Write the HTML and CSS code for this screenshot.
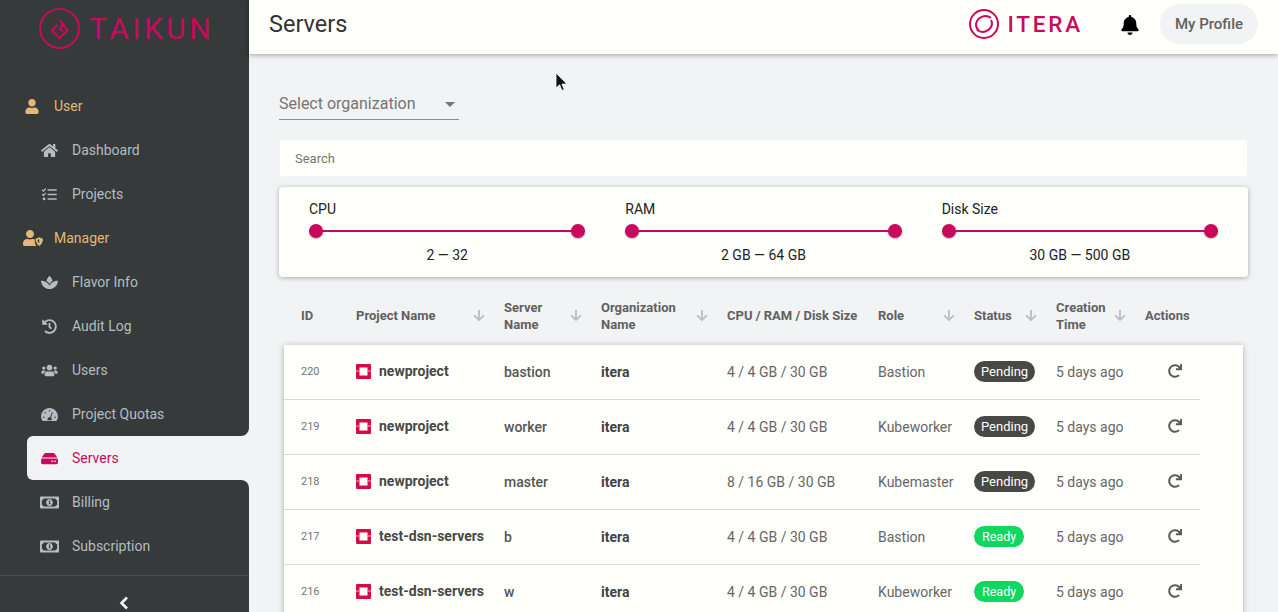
FILE: index.html
```html
<!DOCTYPE html>
<html lang="en">
<head>
  <meta charset="UTF-8" />
  <meta name="viewport" content="width=device-width, initial-scale=1.0" />
  <title>Servers</title>
  <link rel="stylesheet" href="styles.css">
</head>
<body>
  <svg class="sprite" xmlns="http://www.w3.org/2000/svg">
    <symbol id="i-user" viewBox="0 0 448 512"><path d="M224 256c70.7 0 128-57.3 128-128S294.7 0 224 0 96 57.3 96 128s57.3 128 128 128zm89.6 32h-16.7c-22.2 10.2-46.9 16-72.9 16s-50.6-5.8-72.9-16h-16.7C60.2 288 0 348.2 0 422.4V464c0 26.5 21.5 48 48 48h352c26.5 0 48-21.5 48-48v-41.6c0-74.2-60.2-134.4-134.4-134.4z"/></symbol>
    <symbol id="i-home" viewBox="0 0 576 512"><path d="M280.37 148.26L96 300.11V464a16 16 0 0 0 16 16l112.06-.29a16 16 0 0 0 15.92-16V368a16 16 0 0 1 16-16h64a16 16 0 0 1 16 16v95.64a16 16 0 0 0 16 16.05L464 480a16 16 0 0 0 16-16V300L295.67 148.26a12.19 12.19 0 0 0-15.3 0zM571.6 251.47L488 182.56V44.05a12 12 0 0 0-12-12h-56a12 12 0 0 0-12 12v72.61L318.47 43a48 48 0 0 0-61 0L4.34 251.47a12 12 0 0 0-1.6 16.9l25.5 31A12 12 0 0 0 45.15 301l235.22-193.74a12.19 12.19 0 0 1 15.3 0L530.9 301a12 12 0 0 0 16.9-1.6l25.5-31a12 12 0 0 0-1.7-16.93z"/></symbol>
    <symbol id="i-tasks" viewBox="0 0 512 512"><path d="M190 80h310v52H190zM190 230h310v52H190zM190 380h310v52H190z"/><path d="M20 80l30 30 62-72 30 26-90 106-62-62zM20 230l30 30 62-72 30 26-90 106-62-62z"/><circle cx="70" cy="406" r="48"/></symbol>
    <symbol id="i-manager" viewBox="0 0 640 512"><path d="M224 256c70.7 0 128-57.3 128-128S294.7 0 224 0 96 57.3 96 128s57.3 128 128 128zm89.6 32h-16.7c-22.2 10.2-46.9 16-72.9 16s-50.6-5.800-72.9-16h-16.7C60.2 288 0 348.2 0 422.4V464c0 26.5 21.5 48 48 48h352c8 0 16-2 23-6-30-40-47-95-47-160v-45c-19-8-40-13-62.4-13z"/><path fill-rule="evenodd" d="M520 232l112 45c6 2 8 8 8 14 0 90-50 180-120 221-70-41-120-131-120-221 0-6 2-12 8-14zm0 62l-56 22c3 50 26 92 56 116z"/></symbol>
    <symbol id="i-spa" viewBox="0 0 576 512"><path d="M568.25 192c-29.04.13-135.01 6.16-213.84 83-33.12 29.63-53.36 63.3-66.41 94.86-13.05-31.56-33.29-65.23-66.41-94.86-78.83-76.84-184.8-82.87-213.84-83-4.41-.02-7.79 3.4-7.75 7.82.23 27.92 7.14 126.14 88.77 199.3C172.79 480.94 256.03 480 288 480s115.19.94 199.23-80.88c81.64-73.17 88.54-171.38 88.77-199.3.04-4.42-3.34-7.84-7.75-7.82zM287.98 302.6c12.82-18.85 27.6-35.78 44.09-50.52 19.09-18.61 39.58-33.3 60.26-45.18-16.44-70.5-51.72-133.05-96.73-172.22-4.11-3.58-11.02-3.58-15.14 0-44.99 39.14-80.27 101.63-96.74 172.07 20.37 11.7 40.5 26.14 59.22 44.39a282.768 282.768 0 0 1 45.04 51.46z"/></symbol>
    <symbol id="i-history" viewBox="0 0 512 512"><path d="M504 255.531c.253 136.64-111.18 248.372-247.82 248.468-59.015.042-113.223-20.53-155.822-54.911-11.077-8.94-11.905-25.541-1.839-35.607l11.267-11.267c8.609-8.609 22.353-9.551 31.891-1.984C173.062 425.135 212.781 440 256 440c101.705 0 184-82.311 184-184 0-101.705-82.311-184-184-184-48.814 0-93.149 18.969-126.068 49.932l50.754 50.754c10.08 10.08 2.941 27.314-11.313 27.314H24c-8.837 0-16-7.163-16-16V38.627c0-14.254 17.234-21.393 27.314-11.314l49.372 49.372C129.209 34.136 189.552 8 256 8c136.81 0 247.747 110.78 248 247.531zm-180.912 78.784l9.823-12.63c8.138-10.463 6.253-25.542-4.21-33.679L288 256.349V152c0-13.255-10.745-24-24-24h-16c-13.255 0-24 10.745-24 24v135.651l65.409 50.874c10.463 8.137 25.541 6.253 33.679-4.21z"/></symbol>
    <symbol id="i-users" viewBox="0 0 640 512"><path d="M96 224c35.3 0 64-28.7 64-64s-28.7-64-64-64-64 28.7-64 64 28.7 64 64 64zm448 0c35.3 0 64-28.7 64-64s-28.7-64-64-64-64 28.7-64 64 28.7 64 64 64zm32 32h-64c-17.6 0-33.5 7.1-45.1 18.6 40.3 22.1 68.9 62 75.1 109.4h66c17.7 0 32-14.3 32-32v-32c0-35.3-28.7-64-64-64zm-256 0c61.9 0 112-50.1 112-112S381.9 32 320 32 208 82.1 208 144s50.1 112 112 112zm76.8 32h-8.3c-20.8 10-43.9 16-68.5 16s-47.6-6-68.5-16h-8.3C179.6 288 128 339.6 128 403.2V432c0 26.5 21.5 48 48 48h288c26.5 0 48-21.5 48-48v-28.8c0-63.6-51.6-115.2-115.2-115.2zm-223.7-13.4C161.5 263.1 145.6 256 128 256H64c-35.3 0-64 28.7-64 64v32c0 17.7 14.3 32 32 32h65.9c6.3-47.4 34.9-87.3 75.2-109.4z"/></symbol>
    <symbol id="i-gauge" viewBox="0 0 576 512"><path fill-rule="evenodd" d="M288 32C128.94 32 0 160.94 0 320c0 52.8 14.25 102.26 39.06 144.8 5.61 9.62 16.3 15.2 27.44 15.2h443c11.14 0 21.83-5.58 27.44-15.2C561.75 422.26 576 372.8 576 320c0-159.06-128.94-288-288-288zm0 72a26 26 0 1 1 0 52 26 26 0 0 1 0-52zM96 376a26 26 0 1 1 0-52 26 26 0 0 1 0 52zm48-152a26 26 0 1 1 0-52 26 26 0 0 1 0 52zm228-54l30 12-62 178c16 14 26 34 26 56 0 10-2 18-6 32H226c-4-14-6-22-6-32 0-38 30-68 68-68 8 0 14 0 20 2zm108 206a26 26 0 1 1 0-52 26 26 0 0 1 0 52z"/></symbol>
    <symbol id="i-hdd" viewBox="0 0 576 512"><path d="M576 304v96c0 26.51-21.49 48-48 48H48c-26.51 0-48-21.49-48-48v-96c0-26.51 21.49-48 48-48h480c26.51 0 48 21.49 48 48zm-48-80a79.557 79.557 0 0 1 30.777 6.165L462.25 85.374A48.003 48.003 0 0 0 422.311 64H153.689a48 48 0 0 0-39.938 21.374L17.223 230.165A79.557 79.557 0 0 1 48 224h480zm-48 96c-17.673 0-32 14.327-32 32s14.327 32 32 32 32-14.327 32-32-14.327-32-32-32zm-96 0c-17.673 0-32 14.327-32 32s14.327 32 32 32 32-14.327 32-32-14.327-32-32-32z"/></symbol>
    <symbol id="i-money" viewBox="0 0 640 400"><path fill-rule="evenodd" d="M24 0h592c13 0 24 11 24 24v352c0 13-11 24-24 24H24c-13 0-24-11-24-24V24C0 11 11 0 24 0zm96 64c0 32-24 56-56 56v160c32 0 56 24 56 56h400c0-32 24-56 56-56V120c-32 0-56-24-56-56z"/><path fill-rule="evenodd" d="M320 84c62 0 104 52 116 116-12 64-54 116-116 116s-104-52-116-116c12-64 54-116 116-116zm-22 50v36h10v52h-14v34h60v-34h-12v-88z"/></symbol>
    <symbol id="i-bell" viewBox="0 0 448 512"><path d="M224 512c35.32 0 63.97-28.65 63.97-64H160.03c0 35.35 28.65 64 63.97 64zm215.39-149.71c-19.32-20.76-55.47-51.99-55.47-154.29 0-77.7-54.48-139.9-127.94-155.16V32c0-17.67-14.32-32-31.98-32s-31.98 14.33-31.98 32v20.84C118.56 68.1 64.08 130.3 64.08 208c0 102.3-36.15 133.53-55.47 154.29-6 6.45-8.66 14.16-8.61 21.71.11 16.4 12.98 32 32.1 32h383.8c19.12 0 32-15.6 32.1-32 .05-7.55-2.61-15.27-8.61-21.71z"/></symbol>
    <symbol id="i-redo" viewBox="0 0 512 512"><path d="M500.33 0h-47.41a12 12 0 0 0-12 12.57l4 82.76A247.42 247.42 0 0 0 256 8C119.34 8 7.9 119.53 8 256.19 8.1 393.07 119.1 504 256 504a247.1 247.1 0 0 0 166.18-63.91 12 12 0 0 0 .48-17.43l-34-34a12 12 0 0 0-16.38-.55A176 176 0 1 1 402.1 157.8l-101.53-4.87a12 12 0 0 0-12.57 12v47.41a12 12 0 0 0 12 12h200.33a12 12 0 0 0 12-12V12a12 12 0 0 0-12-12z"/></symbol>
    <symbol id="i-arrow" viewBox="0 0 12 12"><path d="M6 .5v10M1.2 5.8L6 10.6l4.8-4.8" fill="none" stroke="currentColor" stroke-width="1.8"/></symbol>
    <symbol id="i-project" viewBox="0 0 15 15"><path fill-rule="evenodd" d="M1 0h13a1 1 0 0 1 1 1v13a1 1 0 0 1-1 1H1a1 1 0 0 1-1-1V1a1 1 0 0 1 1-1zm2.500 3.500v8h8v-8z"/><path fill="#f7a8bd" d="M0 6.500h3.500v1H0zM11.500 6.500H15v1h-3.500z"/></symbol>
  </svg>

  <div class="app">
    <aside class="sidebar">
      <div class="brand">
        <svg class="brand-mark" viewBox="0 0 40 40" fill="none" stroke="#c90a5c">
          <circle cx="20" cy="20" r="19" stroke-width="2"/>
          <path d="M18 16.500l-5.500 5.500 7.500 7.500 8-8-6-6M20 12l4 4.500-3.500 3.500 3 3" stroke-width="2"/>
        </svg>
        <span class="brand-name">TAIKUN</span>
      </div>

      <nav class="nav">
        <div class="nav-row"><a class="nav-link section"><svg class="ic ic-section"><use href="#i-user"/></svg>User</a></div>
        <div class="nav-row"><a class="nav-link"><svg class="ic"><use href="#i-home"/></svg>Dashboard</a></div>
        <div class="nav-row"><a class="nav-link"><svg class="ic"><use href="#i-tasks"/></svg>Projects</a></div>
        <div class="nav-row"><a class="nav-link section"><svg class="ic ic-section-wide"><use href="#i-manager"/></svg>Manager</a></div>
        <div class="nav-row"><a class="nav-link"><svg class="ic"><use href="#i-spa"/></svg>Flavor Info</a></div>
        <div class="nav-row"><a class="nav-link"><svg class="ic"><use href="#i-history"/></svg>Audit Log</a></div>
        <div class="nav-row"><a class="nav-link"><svg class="ic ic-wide"><use href="#i-users"/></svg>Users</a></div>
        <div class="nav-row before-active"><a class="nav-link"><svg class="ic"><use href="#i-gauge"/></svg>Project Quotas</a></div>
        <div class="nav-row"><a class="nav-link active"><svg class="ic"><use href="#i-hdd"/></svg>Servers</a></div>
        <div class="nav-row after-active"><a class="nav-link"><svg class="ic ic-wide"><use href="#i-money"/></svg>Billing</a></div>
        <div class="nav-row"><a class="nav-link"><svg class="ic ic-wide"><use href="#i-money"/></svg>Subscription</a></div>
      </nav>

      <div class="collapse">
        <svg width="10" height="14" viewBox="0 0 10 14" fill="none" stroke="#f1f3f4" stroke-width="2.6"><path d="M8 1.500L2.500 7 8 12.500"/></svg>
      </div>
    </aside>

    <div class="page">
      <header class="topbar">
        <h1 class="page-title">Servers</h1>
        <div class="topbar-right">
          <div class="itera">
            <svg class="itera-mark" viewBox="0 0 30 30" fill="none" stroke="#c90a5c">
              <circle cx="15" cy="15" r="14" stroke-width="2"/>
              <path d="M22 9a9.500 9.500 0 0 0-15 6 9 9 0 0 0 3 7M8 21a9.500 9.500 0 0 0 15-6 9 9 0 0 0-1-4" stroke-width="2"/>
            </svg>
            <span class="itera-name">ITERA</span>
          </div>
          <svg class="bell"><use href="#i-bell"/></svg>
          <button class="profile-btn">My Profile</button>
        </div>
      </header>

      <main class="content">
        <div class="org-select">
          <span>Select organization</span>
          <i class="caret"></i>
        </div>

        <div class="search">Search</div>

        <section class="filters">
          <div class="filter">
            <div class="filter-label">CPU</div>
            <div class="track"><i class="thumb"></i><i class="thumb"></i></div>
            <div class="filter-value">2 — 32</div>
          </div>
          <div class="filter">
            <div class="filter-label">RAM</div>
            <div class="track"><i class="thumb"></i><i class="thumb"></i></div>
            <div class="filter-value">2 GB — 64 GB</div>
          </div>
          <div class="filter">
            <div class="filter-label">Disk Size</div>
            <div class="track"><i class="thumb"></i><i class="thumb"></i></div>
            <div class="filter-value">30 GB — 500 GB</div>
          </div>
        </section>

        <div class="table-head cols">
          <div>ID</div>
          <div class="sort"><span>Project Name</span><svg class="arrow"><use href="#i-arrow"/></svg></div>
          <div class="sort"><span>Server<br>Name</span><svg class="arrow"><use href="#i-arrow"/></svg></div>
          <div class="sort"><span>Organization<br>Name</span><svg class="arrow"><use href="#i-arrow"/></svg></div>
          <div>CPU / RAM / Disk Size</div>
          <div class="sort"><span>Role</span><svg class="arrow"><use href="#i-arrow"/></svg></div>
          <div class="sort"><span>Status</span><svg class="arrow"><use href="#i-arrow"/></svg></div>
          <div class="sort"><span>Creation<br>Time</span><svg class="arrow"><use href="#i-arrow"/></svg></div>
          <div>Actions</div>
        </div>

        <section class="table-card">
          <div class="row cols">
            <div class="cell-id">220</div>
            <div class="cell-project"><svg class="project-ic"><use href="#i-project"/></svg>newproject</div>
            <div class="cell-server">bastion</div>
            <div class="cell-org">itera</div>
            <div>4 / 4 GB / 30 GB</div>
            <div>Bastion</div>
            <div class="cell-status"><span class="badge pending">Pending</span></div>
            <div>5 days ago</div>
            <div class="cell-action"><svg class="redo"><use href="#i-redo"/></svg></div>
          </div>
          <div class="row cols">
            <div class="cell-id">219</div>
            <div class="cell-project"><svg class="project-ic"><use href="#i-project"/></svg>newproject</div>
            <div class="cell-server">worker</div>
            <div class="cell-org">itera</div>
            <div>4 / 4 GB / 30 GB</div>
            <div>Kubeworker</div>
            <div class="cell-status"><span class="badge pending">Pending</span></div>
            <div>5 days ago</div>
            <div class="cell-action"><svg class="redo"><use href="#i-redo"/></svg></div>
          </div>
          <div class="row cols">
            <div class="cell-id">218</div>
            <div class="cell-project"><svg class="project-ic"><use href="#i-project"/></svg>newproject</div>
            <div class="cell-server">master</div>
            <div class="cell-org">itera</div>
            <div>8 / 16 GB / 30 GB</div>
            <div>Kubemaster</div>
            <div class="cell-status"><span class="badge pending">Pending</span></div>
            <div>5 days ago</div>
            <div class="cell-action"><svg class="redo"><use href="#i-redo"/></svg></div>
          </div>
          <div class="row cols">
            <div class="cell-id">217</div>
            <div class="cell-project"><svg class="project-ic"><use href="#i-project"/></svg>test-dsn-servers</div>
            <div class="cell-server">b</div>
            <div class="cell-org">itera</div>
            <div>4 / 4 GB / 30 GB</div>
            <div>Bastion</div>
            <div class="cell-status"><span class="badge ready">Ready</span></div>
            <div>5 days ago</div>
            <div class="cell-action"><svg class="redo"><use href="#i-redo"/></svg></div>
          </div>
          <div class="row cols">
            <div class="cell-id">216</div>
            <div class="cell-project"><svg class="project-ic"><use href="#i-project"/></svg>test-dsn-servers</div>
            <div class="cell-server">w</div>
            <div class="cell-org">itera</div>
            <div>4 / 4 GB / 30 GB</div>
            <div>Kubeworker</div>
            <div class="cell-status"><span class="badge ready">Ready</span></div>
            <div>5 days ago</div>
            <div class="cell-action"><svg class="redo"><use href="#i-redo"/></svg></div>
          </div>
        </section>

        <svg class="cursor" width="13" height="20" viewBox="0 0 13 20"><path d="M1 1v15l3.600-3.200 2.400 5.700 2.300-1-2.400-5.400H12z" fill="#111" stroke="#fff" stroke-width=".8"/></svg>
      </main>
    </div>
  </div>
</body>
</html>
```

FILE: styles.css
```css
* {
  box-sizing: border-box;
}

html, body {
  height: 100%;
}

body {
  margin: 0;
  overflow: hidden;
  font-family: Roboto, "Liberation Sans", sans-serif;
  font-size: 14px;
  color: #666;
  background: #f1f3f4;
}

.sprite {
  display: none;
}

.app {
  display: flex;
  height: 612px;
}

/* sidebar */
.sidebar {
  flex: 0 0 249px;
  background: #363a3a;
  color: #b3bdc3;
}

.brand {
  display: flex;
  align-items: center;
  height: 84px;
  padding: 8px 0 36px 39px;
}

.brand-mark {
  width: 41px;
  height: 41px;
}

.brand-name {
  margin-left: 9px;
  font-size: 30px;
  font-weight: 400;
  letter-spacing: 3.5px;
  color: #c90a5c;
}

.nav-row.before-active, .nav-row.after-active {
  background: #f1f3f4;
}

.nav-row.before-active .nav-link {
  border-bottom-right-radius: 8px;
}

.nav-row.after-active .nav-link {
  border-top-right-radius: 8px;
}

.nav-link {
  display: flex;
  align-items: center;
  height: 44px;
  padding-left: 41px;
  background: #363a3a;
}

.nav-link.section {
  padding-left: 25px;
  color: #e3b878;
}

.nav-link.active {
  margin-left: 27px;
  padding-left: 14px;
  background: #f1f3f4;
  color: #c90a5c;
  border-radius: 6px 0 0 6px;
}

.ic {
  width: 17px;
  height: 15px;
  margin-right: 14px;
  fill: currentColor;
  flex: none;
}

.ic-wide {
  width: 19px;
  height: 13px;
  margin-left: -1px;
  margin-right: 13px;
}

.ic-section {
  width: 14px;
  height: 15px;
  margin-right: 15px;
}

.ic-section-wide {
  width: 20px;
  height: 16px;
  margin-left: -2px;
  margin-right: 11px;
}

.collapse {
  display: flex;
  justify-content: center;
  margin-top: 7px;
  padding-top: 20px;
  padding-right: 2px;
  border-top: 1px solid #4a4e4e;
}

/* top bar */
.page {
  flex: 1;
  min-width: 0;
}

.topbar {
  position: relative;
  display: flex;
  align-items: center;
  justify-content: space-between;
  height: 54px;
  padding: 4px 20px 10px;
  background: #fffffc;
  box-shadow: 0 1px 5px rgba(0, 0, 0, 0.35);
}

.page-title {
  margin: 0;
  font-size: 23.5px;
  font-weight: 400;
  color: #333;
}

.topbar-right {
  display: flex;
  align-items: center;
}

.itera {
  display: flex;
  align-items: center;
}

.itera-mark {
  width: 30px;
  height: 30px;
}

.itera-name {
  margin-left: 8px;
  font-size: 22.5px;
  font-weight: 500;
  letter-spacing: 2.8px;
  color: #c90a5c;
}

.bell {
  width: 18px;
  height: 20px;
  margin: 2px 21px 0 38px;
  fill: #000;
}

.profile-btn {
  width: 98px;
  height: 40px;
  border: 0;
  border-radius: 20px;
  background: #f1f3f4;
  font-family: inherit;
  font-size: 15px;
  font-weight: 500;
  color: #616161;
}

/* content */
.content {
  position: relative;
  padding: 34px 0 0 30px;
}

.org-select {
  display: flex;
  align-items: center;
  justify-content: space-between;
  width: 180px;
  height: 32px;
  padding: 0 4px 0 0;
  border-bottom: 1px solid #8a8a8a;
  font-size: 16px;
  color: #757575;
}

.caret {
  width: 0;
  height: 0;
  margin-top: 1px;
  border-left: 5px solid transparent;
  border-right: 5px solid transparent;
  border-top: 5px solid #757575;
}

.search {
  width: 967px;
  height: 36px;
  margin: 20px 0 0 1px;
  padding-left: 15px;
  border-radius: 2px;
  background: #fffffc;
  font-size: 13px;
  line-height: 38px;
  color: #777;
}

.filters {
  display: grid;
  grid-template-columns: repeat(3, 1fr);
  gap: 40px;
  width: 969px;
  height: 90px;
  margin-top: 11px;
  padding: 13px 30px;
  border-radius: 4px;
  background: #fffffc;
  box-shadow: 0 1px 5px rgba(0, 0, 0, 0.3);
}

.filter-label, .filter-value {
  height: 18px;
  line-height: 18px;
  color: #222;
}

.filter-value {
  margin-top: 8px;
  text-align: center;
}

.track {
  display: flex;
  justify-content: space-between;
  height: 14px;
  margin-top: 6px;
  background: linear-gradient(#c90a5c, #c90a5c) center / 100% 2px no-repeat;
}

.thumb {
  width: 14px;
  height: 14px;
  border-radius: 50%;
  background: #c90a5c;
  box-shadow: 0 1px 2px rgba(0, 0, 0, 0.3);
}

/* table */
.cols {
  display: grid;
  grid-template-columns: 72px 148px 97px 126px 151px 96px 82px 89px 55px;
  width: 916px;
}

.cols > div:first-child {
  padding-left: 17px;
}

.table-head {
  align-items: center;
  height: 39px;
  margin: 19px 0 0 5px;
  font-size: 13px;
  font-weight: 700;
  line-height: 17px;
  color: #616161;
}

.sort {
  display: flex;
  align-items: center;
  justify-content: space-between;
  padding-right: 19px;
}

.arrow {
  width: 12px;
  height: 13px;
  color: #bdbdbd;
  flex: none;
}

.table-card {
  width: 959px;
  margin-top: 10px;
  margin-left: 5px;
  background: #fffffc;
  box-shadow: 0 1px 6px rgba(0, 0, 0, 0.3);
}

.row {
  align-items: center;
  height: 55px;
  border-bottom: 1px solid #d8d8d8;
}

.cell-id {
  margin-top: -2px;
  font-size: 11px;
  color: #757575;
}

.cell-project {
  display: flex;
  align-items: center;
  margin-top: -2px;
  font-weight: 700;
  color: #484848;
  white-space: nowrap;
}

.project-ic {
  width: 15px;
  height: 15px;
  margin-right: 8px;
  fill: #d90b45;
  flex: none;
}

.cell-server {
  font-weight: 500;
  color: #555;
}

.cell-org {
  font-weight: 700;
  color: #424242;
}

.cell-status {
  margin-top: -2px;
}

.badge {
  display: inline-block;
  height: 21px;
  padding: 0 7px;
  border-radius: 11px;
  font-size: 13px;
  line-height: 21px;
  color: #fff;
}

.badge.pending {
  background: #484844;
}

.badge.ready {
  padding: 0 8px;
  background: #0fd75f;
  font-size: 12.5px;
}

.cell-action {
  padding-left: 23px;
}

.redo {
  display: block;
  width: 14px;
  height: 14px;
  margin-top: -2px;
  fill: #5a5a5a;
}

.cursor {
  position: absolute;
  left: 306px;
  top: 18px;
}
```
